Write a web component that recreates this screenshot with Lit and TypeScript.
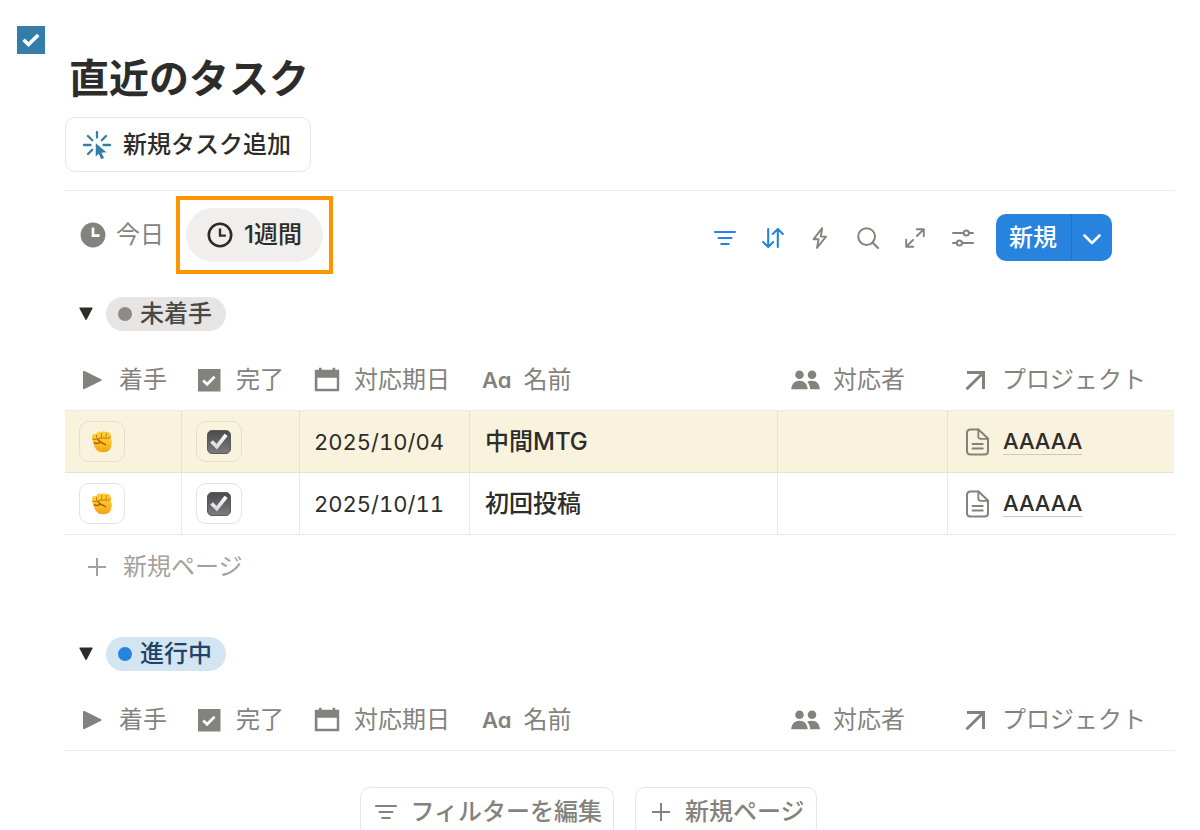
import { LitElement, html, svg, css, nothing, TemplateResult } from "lit";
import { customElement, property, state } from "lit/decorators.js";

type Task = { date: string; name: string; project: string; marked?: boolean };
type Tone = "gray" | "blue";

const shapes: Record<string, TemplateResult> = {
  pageCheck: svg`<rect width="28" height="28" fill="#337ea9"/><path d="M6.500 13.800l5 4.800 9.700-9.600" fill="none" stroke="#fff" stroke-width="3.600"/>`,
  click: svg`<g stroke="#337ea9" stroke-width="2.300" stroke-linecap="round" fill="none"><path d="M14 1v5.500M1 14h6.500M20.500 14H27M5 5l4.200 4.200M23 5l-4.200 4.200M5 23l4.200-4.200"/></g><path d="M12.800 12.200l10.600 9-5 .500 2.700 5.200-2.900 1.200-2.500-5.400-3 3z" fill="#337ea9"/>`,
  clockSolid: svg`<circle cx="13" cy="13" r="12.400" fill="currentColor"/><path d="M13 5.600v8h6.600" fill="none" stroke="#fff" stroke-width="2.600"/>`,
  clock: svg`<circle cx="13" cy="13" r="11.200" fill="none" stroke="currentColor" stroke-width="2.600"/><path d="M13 6.400v7.200h5.800" fill="none" stroke="currentColor" stroke-width="2.400"/>`,
  filter: svg`<path d="M4 8h20M7.500 14h13M10.300 20h7.400" fill="none" stroke="currentColor" stroke-width="2.100" stroke-linecap="round"/>`,
  sort: svg`<path d="M9.200 5v18M4.200 18l5 5 5-5M18.800 23V5M13.800 10l5-5 5 5" fill="none" stroke="currentColor" stroke-width="2.100" stroke-linecap="round" stroke-linejoin="round"/>`,
  bolt: svg`<path d="M16.200 4.200L7.600 15.200h5l-1.600 8.600 9-11.200h-5.200z" fill="none" stroke="currentColor" stroke-width="1.900" stroke-linejoin="round"/>`,
  search: svg`<circle cx="12.600" cy="12.600" r="8.400" fill="none" stroke="currentColor" stroke-width="2"/><path d="M18.800 18.800l5.200 5.200" stroke="currentColor" stroke-width="2.200" stroke-linecap="round"/>`,
  expand: svg`<path d="M16 12l6.600-6.600M15.800 5.200h7v7M12 16l-6.600 6.600M5.200 15.800v7h7" fill="none" stroke="currentColor" stroke-width="1.900" stroke-linecap="round" stroke-linejoin="round"/>`,
  sliders: svg`<g fill="none" stroke="currentColor" stroke-width="2" stroke-linecap="round"><path d="M4 9h10.300M20.300 9H24M4 19h3.300M13.500 19H24"/><circle cx="17.300" cy="9" r="2.600"/><circle cx="10.400" cy="19" r="2.600"/></g>`,
  chevron: svg`<path d="M6.500 11.500L14 19l7.500-7.500" fill="none" stroke="currentColor" stroke-width="2.600" stroke-linecap="round" stroke-linejoin="round"/>`,
  play: svg`<path d="M4 4.900Q4 3.500 5.500 4.100L22.200 12.200Q23.400 13 22.200 13.700L5.500 22Q4 22.600 4 21.200z" fill="currentColor"/>`,
  check: svg`<path d="M2 2h22.500v22.500h-22.500z" fill="currentColor"/><path d="M7.200 13.600l3.900 3.700 7.500-7.500" fill="none" stroke="#fff" stroke-width="2.700"/>`,
  calendar: svg`<path d="M5 .8h2.600v2h11v-2h2.600v2h4v21.400h-24.400v-21.400h4.200zM3.400 10.700v11h19.400v-11z" fill="currentColor" fill-rule="evenodd"/>`,
  people: svg`<g fill="currentColor"><circle cx="9.500" cy="7.700" r="4.300"/><circle cx="22" cy="7.700" r="4.300"/><path d="M1.200 22.300c.7-5.800 3.500-8.500 8.300-8.500s7.500 2.700 8.300 8.500zM17.200 14.700c1.400-.7 3-.9 4.700-.9 4.700 0 7.400 2.700 8.100 8.500h-9.800c-.3-3.200-1.300-5.800-3-7.600z"/></g>`,
  arrow: svg`<path d="M5 5.500h16.500v16.500M21 6L4.500 22.200" fill="none" stroke="currentColor" stroke-width="3"/>`,
  doc: svg`<path d="M13.500 1.500H5.500Q2 1.500 2 5v18q0 3.500 3.500 3.500h14q3.500 0 3.500-3.500V10.500z" fill="none" stroke="currentColor" stroke-width="2" stroke-linejoin="round"/><path d="M13.300 1.500v6.800q0 2.500 2.500 2.500H23M7.500 16h10.300M7.500 20.500h10.300" fill="none" stroke="currentColor" stroke-width="1.800" stroke-linecap="round"/>`,
  plus: svg`<path d="M14 5v18M5 14h18" stroke="currentColor" stroke-width="2"/>`,
  triangle: svg`<path d="M.500 1.500Q0 .500 1 .500H13Q14 .500 13.500 1.500L7.700 12.500Q7 13.500 6.300 12.500z" fill="currentColor"/>`,
  fist: svg`<defs><linearGradient id="skin" x1="0" y1="0" x2="0" y2="1"><stop offset="0" stop-color="#ffcf3a"/><stop offset=".6" stop-color="#fdbd24"/><stop offset="1" stop-color="#f3a118"/></linearGradient></defs>
    <path d="M2.200 12.500Q1 10 1 6.500Q1 4 3.200 4Q4.600 4 5.500 4.600Q5.500 1.800 8 1.600Q9.800 1.500 10.500 2.600Q11.300 1 13 1.200Q14.600 1.300 15.200 2.600Q16 1.700 17.600 2Q19.700 2.400 19.800 5V9Q21 11.500 20.600 14.500Q19.800 20 16.500 21.500Q12 23 7.600 21.500Q3.500 19 2.200 12.500z" fill="url(#skin)"/>
    <path d="M5.500 5v3.500M10.500 3.200v4.600M15.200 3v4.600" stroke="#d98711" stroke-width="1" stroke-linecap="round"/>
    <path d="M1.800 9.200Q4 10.300 6.500 8.800Q12 7.200 16.800 8.300Q18.800 7.800 19.600 6.800" fill="none" stroke="#c9780c" stroke-width="1" stroke-linecap="round"/>
    <path d="M3.300 12.800Q6.500 14.300 9.600 12.200Q12.200 13.500 14.600 14.800M9.600 12.200L6.800 9.600" fill="none" stroke="#9d560c" stroke-width="1.300" stroke-linecap="round"/>`,
  done: svg`<defs><linearGradient id="key" x1="0" y1="0" x2="0" y2="1"><stop offset="0" stop-color="#4b4b4d"/><stop offset="1" stop-color="#7c7c7e"/></linearGradient><linearGradient id="tick" x1="0" y1="0" x2="0" y2="1"><stop offset="0" stop-color="#fff"/><stop offset="1" stop-color="#d4d4d6"/></linearGradient></defs>
    <rect x=".500" y=".500" width="23" height="23" rx="4.500" fill="url(#key)" stroke="#5a5a5d"/><path d="M3.200 12.800l2.700-2.600 3.700 3.900 8-10.300 3 2.100-10.600 13.500z" fill="url(#tick)"/>`,
};

const icon = (name: string, w: number, h = w) =>
  html`<svg width=${w} height=${h} viewBox="0 0 ${w} ${h}" aria-hidden="true">${shapes[name]}</svg>`;

const shared = css`
  * { box-sizing: border-box; }
  svg { display: block; flex: none; }
  button {
    display: flex;
    align-items: center;
    margin: 0;
    padding: 0;
    border: 0;
    background: none;
    color: inherit;
    font: inherit;
    line-height: 32px;
    white-space: nowrap;
    cursor: pointer;
  }
`;

@customElement("task-group")
class TaskGroup extends LitElement {
  @property() label = "";
  @property() tone: Tone = "gray";
  @property({ attribute: false }) tasks: Task[] = [];
  @state() private open = true;

  static styles = [
    shared,
    css`
      :host { display: block; }
      .heading { display: flex; align-items: center; gap: 13px; padding-left: 14px; }
      .toggle { color: #2c2c2b; }
      .closed svg { transform: rotate(-90deg); }
      .pill {
        display: flex;
        align-items: center;
        gap: 8px;
        height: 34px;
        margin: 0;
        padding: 0 14px 0 12px;
        border-radius: 17px;
        font-size: 24px;
        font-weight: 500;
        line-height: 34px;
      }
      .dot { width: 14px; height: 14px; border-radius: 50%; }
      .gray { background: #e6e5e3; color: #494846; }
      .gray .dot { background: #8e8b86; }
      .blue { background: #d3e5f2; color: #1f4467; }
      .blue .dot { background: #2783de; }
      table { width: 100%; margin-top: 19px; border-collapse: separate; border-spacing: 0; table-layout: fixed; }
      th, td { border-bottom: 1px solid #e9e9e7; padding: 0; text-align: left; vertical-align: middle; }
      th { height: 61px; color: #84827d; font-weight: 400; }
      td { height: 62px; border-right: 1px solid #e9e9e7; white-space: nowrap; }
      td:last-child { border-right: 0; }
      .start { width: 117px; }
      .done { width: 118px; }
      .date { width: 170px; }
      .person { width: 170px; }
      .project { width: 226px; }
      .head { display: flex; align-items: center; gap: 14px; padding-left: 14px; white-space: nowrap; }
      .person .head { gap: 12px; padding-left: 12px; }
      .name .head { gap: 12px; padding-left: 12px; }
      .aa { font-size: 22px; font-weight: 600; font-feature-settings: "cv11"; }
      .marked td { background: #f9f2dc; border-color: #e8e2cd; }
      .action {
        justify-content: center;
        width: 46px;
        height: 41px;
        margin-left: 14px;
        border: 1px solid #e4e3e0;
        border-radius: 10px;
      }
      .marked .action { border-color: #e5dfca; }
      td.date { padding-left: 14px; font-size: 22px; font-variant-numeric: tabular-nums; }
      td.name { padding-left: 15px; font-weight: 500; }
      .relation { display: flex; align-items: center; gap: 12px; padding-left: 17px; color: #84827d; }
      .relation a {
        border-bottom: 1px solid #c9c7c2;
        color: #2c2c2b;
        font-size: 22px;
        font-weight: 500;
        line-height: 26px;
        text-decoration: none;
      }
      .marked .relation a { border-color: #cfc9b6; }
      .add { gap: 12px; height: 64px; padding-left: 18px; color: #a4a29d; }
    `,
  ];

  private head(cls: string, mark: unknown, text: string) {
    return html`<th class=${cls} scope="col"><div class="head">${mark}<span>${text}</span></div></th>`;
  }

  render() {
    return html`
      <div class="heading">
        <button class="toggle ${this.open ? "" : "closed"}" aria-label=${this.label}
          aria-expanded=${this.open} @click=${() => (this.open = !this.open)}>${icon("triangle", 14)}</button>
        <h2 class="pill ${this.tone}"><span class="dot"></span>${this.label}</h2>
      </div>
      ${this.open ? this.table() : nothing}
    `;
  }

  private table() {
    return html`
      <table>
        <thead>
          <tr>
            ${this.head("start", icon("play", 26), "着手")}
            ${this.head("done", icon("check", 26), "完了")}
            ${this.head("date", icon("calendar", 26), "対応期日")}
            ${this.head("name", html`<span class="aa">Aa</span>`, "名前")}
            ${this.head("person", icon("people", 31, 26), "対応者")}
            ${this.head("project", icon("arrow", 26), "プロジェクト")}
          </tr>
        </thead>
        <tbody>
          ${this.tasks.map(
            (t) => html`
              <tr class=${t.marked ? "marked" : ""}>
                <td><button class="action" aria-label="着手">${icon("fist", 22, 23)}</button></td>
                <td><button class="action" aria-label="完了">${icon("done", 24)}</button></td>
                <td class="date">${t.date}</td>
                <td class="name">${t.name}</td>
                <td></td>
                <td><div class="relation">${icon("doc", 26, 28)}<a href="#">${t.project}</a></div></td>
              </tr>
            `,
          )}
        </tbody>
      </table>
      ${this.tasks.length ? html`<button class="add">${icon("plus", 28)}新規ページ</button>` : nothing}
    `;
  }
}

@customElement("app-root")
class AppRoot extends LitElement {
  private waiting: Task[] = [
    { date: "2025/10/04", name: "中間MTG", project: "AAAAA", marked: true },
    { date: "2025/10/11", name: "初回投稿", project: "AAAAA" },
  ];

  static styles = [
    shared,
    css`
      :host {
        display: grid;
        grid-template-columns: 65px minmax(0, 1fr);
        align-items: start;
        height: 100vh;
        padding-right: 26px;
        overflow-y: auto;
        scrollbar-width: none;
        box-sizing: border-box;
        background: #fff;
        color: #2c2c2b;
        font-family: Inter, "Noto Sans CJK JP", sans-serif;
        font-size: 24px;
        line-height: 32px;
      }
      .gutter { padding: 26px 0 0 17px; }
      main { padding-top: 53px; }
      h1 { margin: 0; padding-left: 4px; font-size: 40px; font-weight: 700; line-height: 52px; }
      .new-task {
        gap: 12px;
        height: 55px;
        margin-top: 12px;
        padding: 0 19px 0 17px;
        border: 1px solid #e6e5e3;
        border-radius: 10px;
        font-weight: 500;
      }
      .bar {
        display: flex;
        align-items: center;
        margin-top: 18px;
        padding: 5px 62px 0 15px;
        border-top: 1px solid #e9e9e7;
      }
      .tab { gap: 10px; color: #84827d; }
      .frame { margin-left: 12px; padding: 8px 6px; border: 4px solid #ff9500; }
      .frame .tab {
        gap: 11px;
        height: 54px;
        padding: 0 21px;
        border-radius: 27px;
        background: #f0efed;
        color: #2c2c2b;
        font-weight: 500;
      }
      .tools {
        display: flex;
        justify-content: space-between;
        width: 266px;
        margin: 5px 19px 0 auto;
        color: #84827d;
      }
      .active { color: #2783de; }
      .split {
        display: flex;
        height: 47px;
        margin-top: 5px;
        overflow: hidden;
        border-radius: 10px;
        background: #2783de;
        color: #fff;
        font-weight: 500;
      }
      .split .create { padding: 0 14px 0 13px; }
      .split .more { padding: 0 6px; border-left: 1px solid #2270c0; }
      .group { margin-top: 23px; }
      .group + .group { margin-top: 38px; }
      .footer { display: flex; justify-content: center; gap: 21px; margin-top: 36px; padding-right: 62px; }
      .footer button {
        gap: 10px;
        height: 50px;
        padding: 0 11px;
        border: 1px solid #e6e5e3;
        border-radius: 10px;
        color: #84827d;
        font-weight: 500;
      }
    `,
  ];

  render() {
    return html`
      <div class="gutter">${icon("pageCheck", 28)}</div>
      <main>
        <h1>直近のタスク</h1>
        <button class="new-task">${icon("click", 28)}新規タスク追加</button>
        <div class="bar">
          <button class="tab">${icon("clockSolid", 26)}今日</button>
          <div class="frame"><button class="tab">${icon("clock", 26)}1週間</button></div>
          <div class="tools">
            <button class="active" aria-label="フィルター">${icon("filter", 28)}</button>
            <button class="active" aria-label="並べ替え">${icon("sort", 28)}</button>
            <button aria-label="オートメーション">${icon("bolt", 28)}</button>
            <button aria-label="検索">${icon("search", 28)}</button>
            <button aria-label="展開">${icon("expand", 28)}</button>
            <button aria-label="設定">${icon("sliders", 28)}</button>
          </div>
          <div class="split">
            <button class="create">新規</button>
            <button class="more" aria-label="その他">${icon("chevron", 28)}</button>
          </div>
        </div>
        <task-group class="group" label="未着手" tone="gray" .tasks=${this.waiting}></task-group>
        <task-group class="group" label="進行中" tone="blue" .tasks=${[]}></task-group>
        <div class="footer">
          <button>${icon("filter", 28)}フィルターを編集</button>
          <button>${icon("plus", 28)}新規ページ</button>
        </div>
      </main>
    `;
  }
}
